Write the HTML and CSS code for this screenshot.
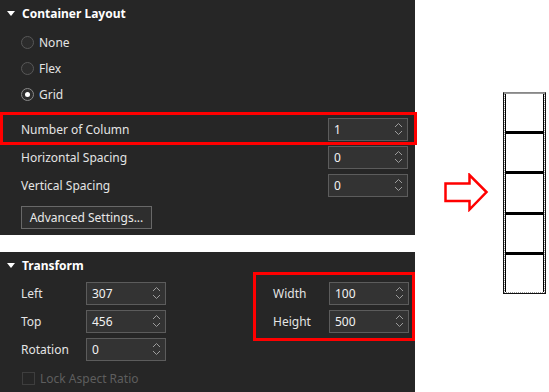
FILE: index.html
```html
<!doctype html>
<html lang="en">
<head>
    <meta charset="UTF-8">
    <title>Container Layout</title>
    <link rel="stylesheet" href="styles.css">
</head>
<body>
    <div class="page">
        <div class="panels">
            <!-- container layout -->
            <section class="panel">
                <div class="panel_head"><span class="caret"></span>Container Layout</div>
                <ul class="radio_list">
                    <li><span class="radio"></span>None</li>
                    <li><span class="radio"></span>Flex</li>
                    <li><span class="radio checked"></span>Grid</li>
                </ul>
                <div class="field mark">
                    <span class="field_label">Number of Column</span>
                    <div class="spin"><span>1</span><svg class="spin_arrows" width="9" height="14" viewBox="0 0 9 14"><polyline points="1,5 4.5,1.5 8,5"/><polyline points="1,9 4.5,12.5 8,9"/></svg></div>
                </div>
                <div class="field">
                    <span class="field_label">Horizontal Spacing</span>
                    <div class="spin"><span>0</span><svg class="spin_arrows" width="9" height="14" viewBox="0 0 9 14"><polyline points="1,5 4.5,1.5 8,5"/><polyline points="1,9 4.5,12.5 8,9"/></svg></div>
                </div>
                <div class="field">
                    <span class="field_label">Vertical Spacing</span>
                    <div class="spin"><span>0</span><svg class="spin_arrows" width="9" height="14" viewBox="0 0 9 14"><polyline points="1,5 4.5,1.5 8,5"/><polyline points="1,9 4.5,12.5 8,9"/></svg></div>
                </div>
                <button class="btn">Advanced Settings...</button>
            </section>

            <!-- transform -->
            <section class="panel transform">
                <div class="panel_head"><span class="caret"></span>Transform</div>
                <div class="transform_cols">
                    <div class="col_pos">
                        <div class="field">
                            <span class="field_label">Left</span>
                            <div class="spin"><span>307</span><svg class="spin_arrows" width="9" height="14" viewBox="0 0 9 14"><polyline points="1,5 4.5,1.5 8,5"/><polyline points="1,9 4.5,12.5 8,9"/></svg></div>
                        </div>
                        <div class="field">
                            <span class="field_label">Top</span>
                            <div class="spin"><span>456</span><svg class="spin_arrows" width="9" height="14" viewBox="0 0 9 14"><polyline points="1,5 4.5,1.5 8,5"/><polyline points="1,9 4.5,12.5 8,9"/></svg></div>
                        </div>
                        <div class="field">
                            <span class="field_label">Rotation</span>
                            <div class="spin"><span>0</span><svg class="spin_arrows" width="9" height="14" viewBox="0 0 9 14"><polyline points="1,5 4.5,1.5 8,5"/><polyline points="1,9 4.5,12.5 8,9"/></svg></div>
                        </div>
                    </div>
                    <div class="col_size">
                        <div class="field">
                            <span class="field_label">Width</span>
                            <div class="spin"><span>100</span><svg class="spin_arrows" width="9" height="14" viewBox="0 0 9 14"><polyline points="1,5 4.5,1.5 8,5"/><polyline points="1,9 4.5,12.5 8,9"/></svg></div>
                        </div>
                        <div class="field">
                            <span class="field_label">Height</span>
                            <div class="spin"><span>500</span><svg class="spin_arrows" width="9" height="14" viewBox="0 0 9 14"><polyline points="1,5 4.5,1.5 8,5"/><polyline points="1,9 4.5,12.5 8,9"/></svg></div>
                        </div>
                    </div>
                </div>
                <div class="lock"><span class="checkbox"></span>Lock Aspect Ratio</div>
            </section>
        </div>

        <svg class="arrow" width="45" height="39" viewBox="0 0 45 39">
            <polygon points="1.5,10.5 25.5,10.5 25.5,2 42.5,19 25.5,36.5 25.5,28 1.5,28"/>
        </svg>

        <div class="grid_figure">
            <div class="grid_track">
                <div class="cell"></div>
                <div class="cell"></div>
                <div class="cell"></div>
                <div class="cell"></div>
                <div class="cell"></div>
            </div>
        </div>
    </div>
</body>
</html>
```

FILE: styles.css
```css
*{
    padding:0;
    margin:0;
    box-sizing: border-box;
}
ul{
    list-style: none;
}
body{
    background: #fff;
    font-family: "Noto Sans", "Open Sans", sans-serif;
    font-size: 12px;
    color: #e4e4e4;
    overflow: hidden;
}
.page{
    display: flex;
    align-items: flex-start;
    height: 392px;
}
.panels{
    width: 415px;
    display: flex;
    flex-direction: column;
    gap: 17px;
}
.panel{
    background: #262626;
    padding-bottom: 6px;
}
.panel_head{
    height: 27px;
    display: flex;
    align-items: center;
    padding-left: 7px;
    font-weight: bold;
    color: #fff;
}
.caret{
    width: 0;
    height: 0;
    border-left: 4.5px solid transparent;
    border-right: 4.5px solid transparent;
    border-top: 5px solid #fff;
    margin-right: 7px;
}
.radio_list{
    padding-top: 2px;
    margin-bottom: 8px;
}
.radio_list li{
    height: 26px;
    display: flex;
    align-items: center;
    padding-left: 21px;
}
.radio{
    width: 13px;
    height: 13px;
    border: 1px solid #585858;
    border-radius: 50%;
    background: #2c2c2c;
    margin-right: 5px;
    display: flex;
    align-items: center;
    justify-content: center;
}
.radio.checked{
    border-color: #8a8a8a;
}
.radio.checked::after{
    content: "";
    width: 5px;
    height: 5px;
    border-radius: 50%;
    background: #fff;
}
.field{
    height: 28px;
    display: flex;
    align-items: center;
    justify-content: space-between;
    padding: 0 7px 0 21px;
}
.mark{
    position: relative;
}
.mark::after{
    content: "";
    position: absolute;
    top: -3px;
    bottom: -2px;
    left: 0;
    right: -2px;
    border: 3px solid #ff0000;
}
.spin{
    width: 80px;
    height: 23px;
    border: 1px solid #5c5c5c;
    background: #333;
    display: flex;
    align-items: center;
    justify-content: space-between;
    padding: 0 4px 0 5px;
    color: #f2f2f2;
}
.spin_arrows polyline{
    fill: none;
    stroke: #9c9c9c;
    stroke-width: 1;
}
.btn{
    display: block;
    margin: 7px 0 0 21px;
    width: 131px;
    height: 23px;
    background: #2e2e2e;
    border: 1px solid #686868;
    color: #e8e8e8;
    font-family: inherit;
    font-size: 12px;
}
.transform{
    flex: 1;
    height: 140px;
}
.transform_cols{
    display: flex;
    align-items: flex-start;
}
.col_pos{
    width: 253px;
}
.col_pos .field{
    justify-content: flex-start;
}
.col_pos .field_label{
    width: 65px;
}
.col_size{
    flex: 1;
    position: relative;
}
.col_size .field{
    justify-content: flex-start;
    padding: 0 6px 0 20px;
}
.col_size .field_label{
    width: 56px;
}
.col_size::after{
    content: "";
    position: absolute;
    top: -7px;
    bottom: -6px;
    left: 0;
    right: 0;
    border: 3px solid #ff0000;
}
.lock{
    height: 28px;
    margin-top: 1px;
    display: flex;
    align-items: center;
    padding-left: 22px;
    color: #5e5e5e;
}
.checkbox{
    width: 13px;
    height: 13px;
    border: 1px solid #3e3e3e;
    margin-right: 5px;
}
.arrow{
    margin: 173px 0 0 29px;
}
.arrow polygon{
    fill: #fff;
    stroke: #ff0000;
    stroke-width: 2.5;
}
.grid_figure{
    margin: 92px 0 0 14px;
    width: 43px;
    height: 202px;
    border: 1px solid #111;
    border-top-color: #888;
    background: #fff;
}
.grid_track{
    height: 100%;
    border: 1px dotted #9a9a9a;
    border-top-style: solid;
    display: flex;
    flex-direction: column;
}
.cell{
    flex: 1;
    border-left: 1px solid #000;
    border-right: 1px solid #000;
}
.cell + .cell{
    border-top: 3px solid #000;
}
```
